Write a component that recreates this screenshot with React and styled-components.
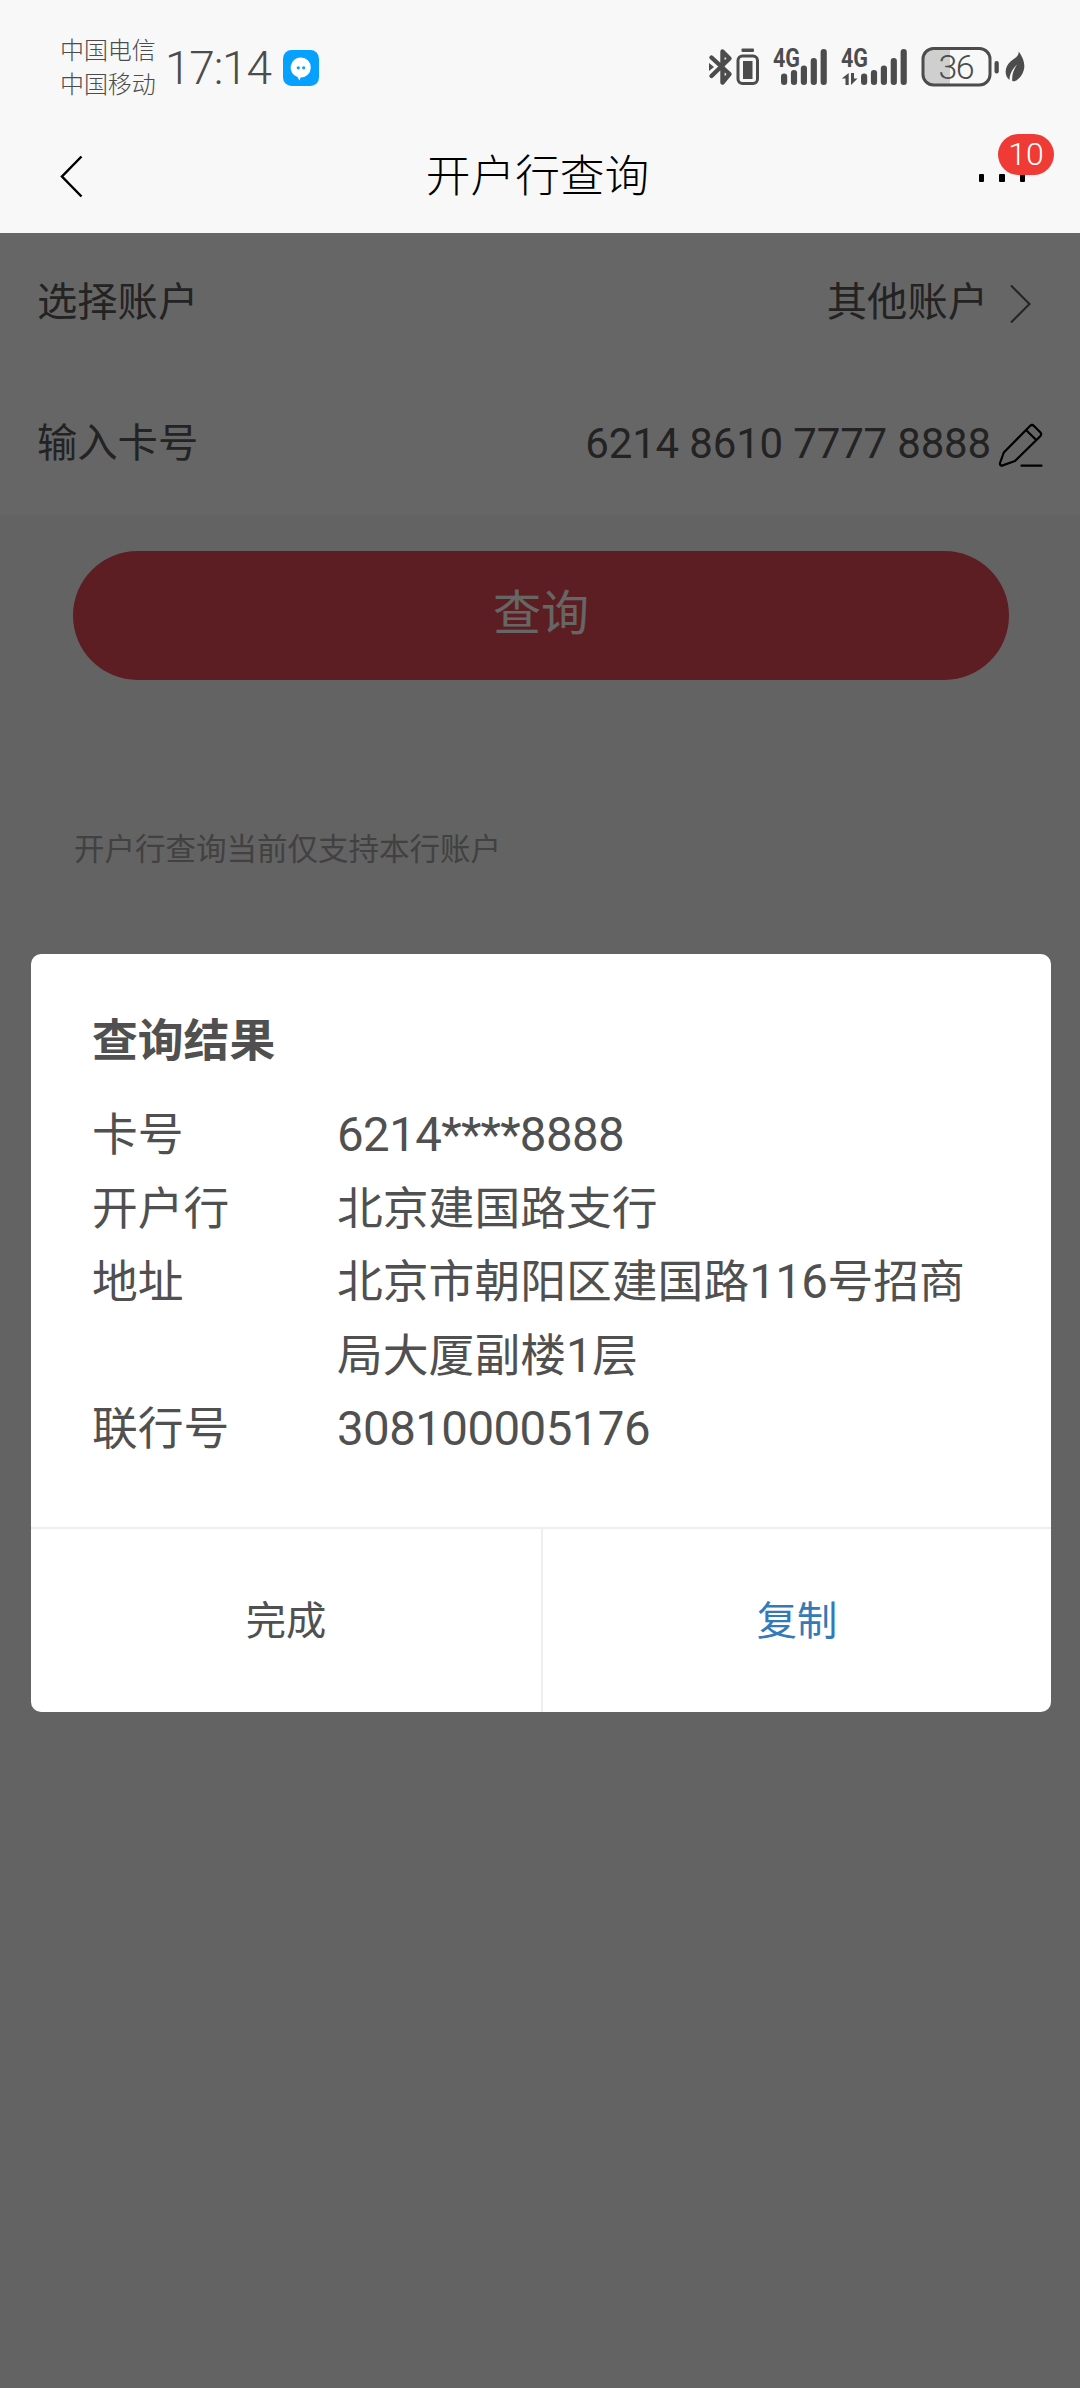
import React from "react";
import styled, { createGlobalStyle } from "styled-components";

const GlobalStyle = createGlobalStyle`
  * { box-sizing: border-box; }
  body { margin: 0; background: #f8f8f8; }
  button { border: 0; background: none; padding: 0; margin: 0; font: inherit; color: inherit; }
  svg { display: block; flex: none; }
`;

const Screen = styled.div`
  width: 1080px;
  height: 2388px;
  display: flex;
  flex-direction: column;
  overflow: hidden;
  font-family: Roboto, "Noto Sans CJK SC", sans-serif;
  color: #505050;
`;

const StatusBar = styled.header`
  height: 120px;
  display: flex;
  align-items: flex-start;
  justify-content: space-between;
  background: #f8f8f8;
  color: #4c4c4c;
`;

const StatusLeft = styled.div`
  display: flex;
  padding-left: 60px;
`;

const Carriers = styled.div`
  width: 105px;
  padding-top: 32px;
  font-family: "Noto Sans CJK SC", sans-serif;
  font-size: 24px;
  font-weight: 300;
  line-height: 34px;
  letter-spacing: -0.1px;
  white-space: nowrap;
`;

const Clock = styled.div`
  width: 118px;
  padding-top: 40px;
  font-size: 46px;
  font-weight: 300;
  line-height: 56px;
  letter-spacing: -1.2px;
`;

const ChatIcon = styled.svg`
  margin-top: 50px;
`;

const StatusIcons = styled.svg`
  margin-top: 40px;
  margin-right: 50px;
`;

const NavBar = styled.nav`
  height: 113px;
  flex: none;
  display: grid;
  grid-template-columns: 140px 1fr 140px;
  background: #f8f8f8;
  color: #000;
`;

const BackButton = styled.button`
  display: flex;
  padding: 34px 0 0 59px;
`;

const NavTitle = styled.h1`
  margin: 0;
  padding-top: 25px;
  padding-right: 5px;
  text-align: center;
  font-size: 44.7px;
  font-weight: 300;
  line-height: 64px;
`;

const MoreButton = styled.button`
  position: relative;
  display: flex;
  gap: 15px;
  padding: 54px 0 0 39px;
`;

const Dot = styled.i`
  width: 5.4px;
  height: 8px;
  border-radius: 1px;
  background: #000;
`;

const Badge = styled.span`
  position: absolute;
  left: 58px;
  top: 14px;
  width: 56px;
  height: 41px;
  border-radius: 21px;
  background: #ef3a36;
  color: #fff;
  font-size: 32px;
  font-weight: 300;
  line-height: 41px;
  text-align: center;
`;

const Page = styled.main`
  position: relative;
  flex: 1;
  background: #f7f7f7;
`;

const Row = styled.div`
  height: 141px;
  display: flex;
  align-items: center;
  justify-content: space-between;
  padding: 0 ${(p) => p.$end}px 1px 37px;
  background: #fff;
  color: #575757;
  font-size: 40.3px;
  line-height: 60px;
`;

const RowValue = styled.div`
  display: flex;
  align-items: center;
  gap: ${(p) => p.$gap}px;
`;

const RowIcon = styled.svg`
  margin-top: ${(p) => p.$drop}px;
`;

const CardNumber = styled.span`
  font-size: 42px;
  letter-spacing: -0.17px;
`;

const QueryButton = styled.button`
  display: block;
  width: 936px;
  height: 129px;
  margin: 36px 0 0 73px;
  padding-bottom: 13px;
  border-radius: 65px;
  background: #e64b55;
  color: #fff;
  font-size: 48px;
`;

const Note = styled.p`
  margin: 148px 0 0 74px;
  color: #a3a3a3;
  font-size: 30.5px;
  line-height: 44px;
`;

const Overlay = styled.div`
  position: absolute;
  inset: 0;
  padding: 721px 29px 0 31px;
  background: rgba(0, 0, 0, 0.6);
`;

const Dialog = styled.section`
  height: 758px;
  display: flex;
  flex-direction: column;
  border-radius: 10px;
  background: #fff;
`;

const DialogBody = styled.div`
  height: 574px;
  padding: 52px 60px 0 61px;
`;

const DialogTitle = styled.h2`
  margin: 0 0 21px;
  font-size: 45.8px;
  font-weight: 700;
  line-height: 72px;
`;

const Details = styled.dl`
  display: grid;
  grid-template-columns: 245px 1fr;
  margin: 0;
  font-size: 45.8px;
  line-height: 73.6px;
`;

const Label = styled.dt`
  margin: 0;
`;

const Value = styled.dd`
  margin: 0;
  white-space: nowrap;
`;

const Num = styled.span`
  font-size: 47.4px;
  line-height: 1;
  letter-spacing: -0.55px;
`;

const Stars = styled.span`
  letter-spacing: -0.8px;
`;

const Actions = styled.div`
  flex: 1;
  display: grid;
  grid-template-columns: 512px 1fr;
  border-top: 2px solid #eee;
`;

const Action = styled.button`
  height: 183px;
  padding-bottom: 7px;
  color: ${(p) => (p.$primary ? "#337ab7" : "#505050")};
  font-size: 40.3px;
  border-right: ${(p) => (p.$primary ? "0" : "2px solid #eee")};
`;

function Bars({ x, tops }) {
  return tops.map((top, i) => (
    <rect key={i} x={x + i * 9.9} y={top} width="6.2" height={85 - top} rx="3" />
  ));
}

function StatusIndicators() {
  return (
    <StatusIcons width="330" height="60" viewBox="700 40 330 60" fill="#4c4c4c">
      <g fill="none" stroke="#4c4c4c" strokeWidth="4.4" strokeLinejoin="round" strokeLinecap="round">
        <path d="M711.500 57.500 L729.500 74 L722.500 82.500 V51.500 L729.500 58.500 L711.500 76" />
        <rect x="738" y="56" width="19.500" height="27.500" rx="4.500" strokeWidth="3" />
      </g>
      <path d="M709 63 L714 67 L709 71Z" />
      <rect x="741.500" y="48.500" width="12.500" height="3.500" rx="1" />
      <rect x="743" y="61" width="9.500" height="18" />
      <text x="773" y="67" fontSize="25" fontWeight="700" fontFamily="Roboto, sans-serif" textLength="27" lengthAdjust="spacingAndGlyphs">4G</text>
      <Bars x={781} tops={[73.5, 70, 65.5, 58, 49]} />
      <text x="841" y="67" fontSize="25" fontWeight="700" fontFamily="Roboto, sans-serif" textLength="27" lengthAdjust="spacingAndGlyphs">4G</text>
      <path d="M848.700 73 V85 H845.500 V78.500 H841.800 Z M851 73 H854 V78.500 H857.500 L851 85 Z" />
      <Bars x={861} tops={[73.5, 70, 65.5, 58, 49]} />
      <path d="M950 49 H935 Q924 49 924 60 V74 Q924 84 935 84 H950Z" fill="#cfcfcf" />
      <rect x="923" y="48.500" width="67" height="36.500" rx="10.500" fill="none" stroke="#4c4c4c" strokeWidth="3" />
      <text x="938.500" y="79" fontSize="34" fontWeight="300" fontFamily="Roboto, sans-serif" textLength="36">36</text>
      <rect x="994.500" y="61" width="4.300" height="12.500" rx="2.100" />
      <path d="M1018.800 51.500 C1025.500 61 1026 69 1021 76 C1018 80 1014.500 82 1012.300 81 C1011.500 75 1014 69 1017 64.500 C1012.500 69 1009.500 74 1009.500 80 C1003.500 75 1005 66.500 1010.500 61.500 C1014.500 58 1018.500 57 1018.800 51.500Z" />
    </StatusIcons>
  );
}

export default function App() {
  return (
    <Screen>
      <GlobalStyle />
      <StatusBar>
        <StatusLeft>
          <Carriers>
            <div>中国电信</div>
            <div>中国移动</div>
          </Carriers>
          <Clock>17:14</Clock>
          <ChatIcon width="36" height="36" viewBox="0 0 36 36">
            <rect width="36" height="36" rx="8.500" fill="#06a1ff" />
            <path d="M18 7.500 A10 10 0 1 1 17.500 27.600 L16.500 30.500 L14.500 27 A10 10 0 0 1 18 7.500Z" fill="#fff" />
            <circle cx="15.300" cy="17.800" r="1.600" fill="#06a1ff" />
            <circle cx="20.700" cy="17.800" r="1.600" fill="#06a1ff" />
          </ChatIcon>
        </StatusLeft>
        <StatusIndicators />
      </StatusBar>

      <NavBar>
        <BackButton aria-label="返回">
          <svg width="26" height="46" viewBox="0 0 26 46" fill="none" stroke="#000" strokeWidth="2.500">
            <path d="M22.500 2.500 L3 22.500 L22.500 42.500" />
          </svg>
        </BackButton>
        <NavTitle>开户行查询</NavTitle>
        <MoreButton aria-label="更多">
          <Dot />
          <Dot />
          <Dot />
          <Badge>10</Badge>
        </MoreButton>
      </NavBar>

      <Page>
        <Row $end={48}>
          <span>选择账户</span>
          <RowValue $gap={21}>
            <span>其他账户</span>
            <RowIcon $drop={-1} width="23" height="42" viewBox="0 0 23 42" fill="none" stroke="#575757" strokeWidth="2">
              <path d="M2 3.500 L20.500 22 L2 40.500" />
            </RowIcon>
          </RowValue>
        </Row>
        <Row $end={36}>
          <span>输入卡号</span>
          <RowValue $gap={7}>
            <CardNumber>6214 8610 7777 8888</CardNumber>
            <RowIcon $drop={3} width="46" height="46" viewBox="998 422 46 46" fill="none" stroke="#000" strokeWidth="2.200" strokeLinecap="round" strokeLinejoin="round">
              <path d="M1030 425 Q1032 423 1034 425 L1040.500 431.500 Q1042 433.500 1040 435.500 L1015 460 L1002 464.600 Q999.600 464.800 1000 462 L1003.800 451.500 Z M1026 429 L1036 438.800 M1021.500 464.700 H1041.500" />
            </RowIcon>
          </RowValue>
        </Row>
        <QueryButton>查询</QueryButton>
        <Note>开户行查询当前仅支持本行账户</Note>

        <Overlay>
          <Dialog role="dialog">
            <DialogBody>
              <DialogTitle>查询结果</DialogTitle>
              <Details>
                <Label>卡号</Label>
                <Value><Num>6214<Stars>****</Stars>8888</Num></Value>
                <Label>开户行</Label>
                <Value>北京建国路支行</Value>
                <Label>地址</Label>
                <Value>北京市朝阳区建国路<Num>116</Num>号招商<br />局大厦副楼<Num>1</Num>层</Value>
                <Label>联行号</Label>
                <Value><Num>308100005176</Num></Value>
              </Details>
            </DialogBody>
            <Actions>
              <Action>完成</Action>
              <Action $primary>复制</Action>
            </Actions>
          </Dialog>
        </Overlay>
      </Page>
    </Screen>
  );
}
